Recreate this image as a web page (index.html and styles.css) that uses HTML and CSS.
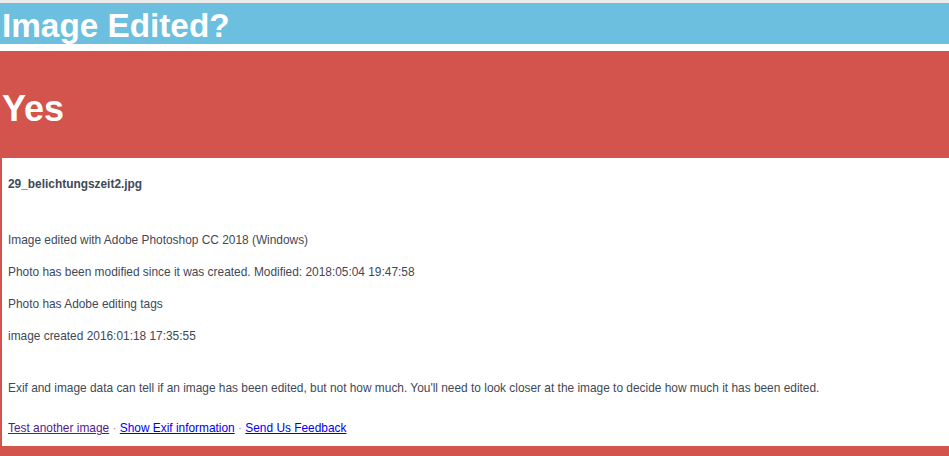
FILE: index.html
```html
<!DOCTYPE html>
<html lang="en">
<head>
    <meta charset="UTF-8">
    <meta name="viewport" content="width=device-width, initial-scale=1.0">
    <title>Image Edited?</title>
    <link rel="stylesheet" href="styles.css">
</head>
<body>
<div class="header">
    <h1>Image Edited?</h1>
</div>

<div class="verdict">
    <h2 class="answer">Yes</h2>

    <div class="result">
        <p class="filename">29_belichtungszeit2.jpg</p>

        <div class="reasons">
            <p>Image edited with Adobe Photoshop CC 2018 (Windows)</p>
            <p>Photo has been modified since it was created. Modified: 2018:05:04 19:47:58</p>
            <p>Photo has Adobe editing tags</p>
            <p>image created 2016:01:18 17:35:55</p>
        </div>

        <p class="note">Exif and image data can tell if an image has been edited, but not how much. You'll need to look closer at the image to decide how much it has been edited.</p>

        <p class="links">
            <a href="#" class="visited">Test another image</a>
            <span class="sep">&middot;</span>
            <a href="#">Show Exif information</a>
            <span class="sep">&middot;</span>
            <a href="#">Send Us Feedback</a>
        </p>
    </div>
</div>
</body>
</html>
```

FILE: styles.css
```css
:root {
    --blue: #6cbfde;
    --red: #d2544d;
    --text-color: #414956;
}

* {
    margin: 0;
    padding: 0;
    box-sizing: border-box;
}

body {
    font-family: "Liberation Sans", Arial, sans-serif;
    background: #fff;
    border-top: 3px solid #ececec;
    color: var(--text-color);
}

.header {
    background: var(--blue);
    padding: 4px 2px 0;
    margin-bottom: 7px;
}

.header h1 {
    font-size: 33.3px;
    font-weight: 700;
    color: #fff;
    line-height: 37px;
}

.verdict {
    background: var(--red);
    padding: 0 0 12px 2px;
}

.answer {
    font-size: 36px;
    font-weight: 700;
    color: #fff;
    line-height: 41px;
    padding: 37px 0 29px;
}

.result {
    background: #fff;
    padding: 19px 8px 11px 6px;
    font-size: 11.9px;
    line-height: 14px;
}

.filename {
    font-weight: 700;
    margin-bottom: 42px;
}

.reasons p + p {
    margin-top: 18px;
}

.note {
    margin: 38px 0 26px;
}

.links a {
    color: #0000ee;
}

.links a.visited {
    color: #551a8b;
}

.sep {
    color: #9a9a9a;
}
```
